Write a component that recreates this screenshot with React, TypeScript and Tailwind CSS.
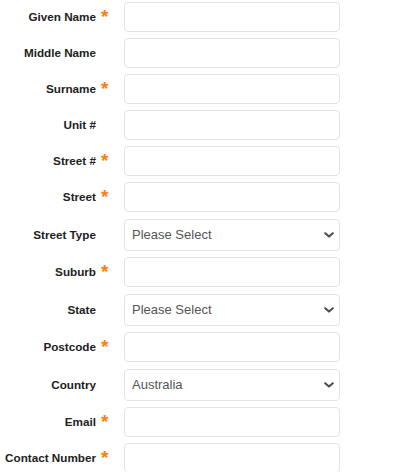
import { ChangeEvent, useState } from "react";

type Field = {
    label: string;
    name: string;
    required?: boolean;
    kind: "text" | "select";
    options?: string[];
};

const fields: Field[] = [
    { label: "Given Name", name: "givenName", required: true, kind: "text" },
    { label: "Middle Name", name: "middleName", kind: "text" },
    { label: "Surname", name: "surname", required: true, kind: "text" },
    { label: "Unit #", name: "unit", kind: "text" },
    { label: "Street #", name: "streetNumber", required: true, kind: "text" },
    { label: "Street", name: "street", required: true, kind: "text" },
    { label: "Street Type", name: "streetType", kind: "select", options: ["Please Select", "Street", "Road", "Avenue", "Court"] },
    { label: "Suburb", name: "suburb", required: true, kind: "text" },
    { label: "State", name: "state", kind: "select", options: ["Please Select", "NSW", "VIC", "QLD", "WA", "SA", "TAS", "ACT", "NT"] },
    { label: "Postcode", name: "postcode", required: true, kind: "text" },
    { label: "Country", name: "country", kind: "select", options: ["Australia", "New Zealand"] },
    { label: "Email", name: "email", required: true, kind: "text" },
    { label: "Contact Number", name: "contactNumber", required: true, kind: "text" },
];

function Chevron() {
    return (
        <svg className="pointer-events-none absolute right-[6px] top-1/2 -translate-y-1/2" width="10" height="6" viewBox="0 0 10 6" fill="none">
            <path d="M1.2 1.2 5 4.6 8.8 1.2" stroke="#4a4a4a" strokeWidth="2" strokeLinecap="round" strokeLinejoin="round" />
        </svg>
    );
}

export default function App() {
    const [values, setValues] = useState<Record<string, string>>({
        streetType: "Please Select",
        state: "Please Select",
        country: "Australia",
    });

    const handleChange = (e: ChangeEvent<HTMLInputElement | HTMLSelectElement>) => {
        setValues({ ...values, [e.target.name]: e.target.value });
    };

    return (
        <div className="w-[402px] h-[472px] bg-white pt-[2px] overflow-hidden" style={{ fontFamily: '"Liberation Sans", Arial, sans-serif' }}>
            <form className="flex flex-col gap-[6px]">
                {fields.map(field => (
                    <div key={field.name} className="flex items-center">
                        <label htmlFor={field.name} className="w-[96px] text-right text-[11.7px] font-bold text-[#222222] leading-none">
                            {field.label}
                        </label>
                        <span className="w-[28px] pl-[5px] text-[19px] font-bold leading-none text-[#ff7f0a] -mt-[1px]">
                            {field.required ? "*" : ""}
                        </span>
                        {field.kind === "text" ? (
                            <input
                                id={field.name}
                                name={field.name}
                                type="text"
                                value={values[field.name] || ""}
                                onChange={handleChange}
                                className="w-[216px] h-[30px] rounded-[4px] border border-[#e3e3e3] bg-white px-[7px] text-[13px] text-[#555555] outline-none"
                            />
                        ) : (
                            <div className="relative w-[216px] mt-[1px]">
                                <select
                                    id={field.name}
                                    name={field.name}
                                    value={values[field.name]}
                                    onChange={handleChange}
                                    className="block w-full h-[32px] appearance-none rounded-[4px] border border-[#e3e3e3] bg-white pl-[7px] pr-6 text-[13px] text-[#555555] outline-none"
                                >
                                    {field.options?.map(opt => (
                                        <option key={opt} value={opt}>{opt}</option>
                                    ))}
                                </select>
                                <Chevron />
                            </div>
                        )}
                    </div>
                ))}
            </form>
        </div>
    );
}
